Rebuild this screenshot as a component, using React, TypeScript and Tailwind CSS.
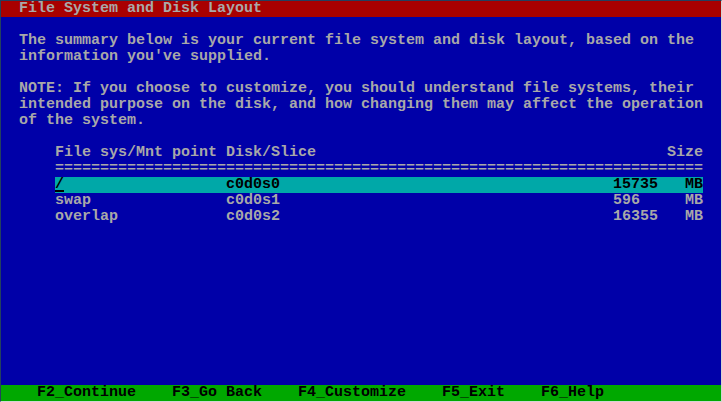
import React from "react";

const font = { fontFamily: '"Liberation Mono", "DejaVu Sans Mono", monospace' };

function Line({ children, className = "" }: { children?: React.ReactNode; className?: string }) {
  return <div className={`h-4 whitespace-pre leading-4 ${className}`}>{children}</div>;
}

const rows = [
  { mnt: "/", disk: "c0d0s0", size: "15735", sel: true },
  { mnt: "swap", disk: "c0d0s1", size: "596", sel: false },
  { mnt: "overlap", disk: "c0d0s2", size: "16355", sel: false },
];

export default function App() {
  return (
    <div
      className="w-[722px] h-[402px] border-t border-l border-r border-b border-t-[#23405e] border-l-[#23405e] border-r-[#d4d4d4] border-b-[#d4d4d4] bg-[#0000a8] text-[#a8a8a8] text-[15px] font-bold flex flex-col overflow-hidden"
      style={font}
    >
      <Line className="bg-[#a80000] pl-[18px]">File System and Disk Layout</Line>
      <div className="flex-1 flex flex-col pl-[18px]">
        <Line />
        <Line>The summary below is your current file system and disk layout, based on the</Line>
        <Line>information you've supplied.</Line>
        <Line />
        <Line>NOTE: If you choose to customize, you should understand file systems, their</Line>
        <Line>intended purpose on the disk, and how changing them may affect the operation</Line>
        <Line>of the system.</Line>
        <Line />
        <div className="ml-[36px] w-[648px] flex flex-col">
          <div className="grid grid-cols-[171px_387px_72px_18px] h-4 leading-4 whitespace-pre">
            <span>File sys/Mnt point</span>
            <span>Disk/Slice</span>
            <span className="col-span-2 text-right">Size</span>
          </div>
          <Line>{"=".repeat(72)}</Line>
          {rows.map((r) => (
            <div
              key={r.disk}
              className={`grid grid-cols-[171px_387px_72px_18px] h-4 leading-4 whitespace-pre ${
                r.sel ? "bg-[#00a8a8] text-black" : ""
              }`}
            >
              <span>
                {r.sel ? (
                  <span className="relative inline-block">
                    {r.mnt}
                    <span className="absolute left-0 w-[9px] top-[13px] h-[2px] bg-black" />
                  </span>
                ) : (
                  r.mnt
                )}
              </span>
              <span>{r.disk}</span>
              <span>{r.size}</span>
              <span>MB</span>
            </div>
          ))}
        </div>
      </div>
      <Line className="bg-[#00a800] text-black pl-[36px]">
        {"F2_Continue    F3_Go Back    F4_Customize    F5_Exit    F6_Help"}
      </Line>
    </div>
  );
}
